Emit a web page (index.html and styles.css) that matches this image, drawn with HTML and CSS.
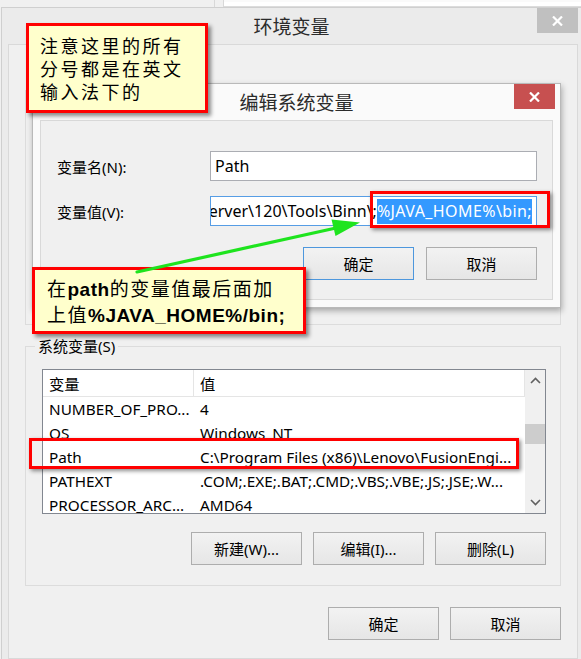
FILE: index.html
```html
<!DOCTYPE html>
<html lang="zh-CN">
<head>
<meta charset="utf-8">
<title>环境变量</title>
<link rel="stylesheet" href="styles.css">
</head>
<body>
<div class="stage">
  <div class="bgwin">
    <div class="bg-left"></div>
    <div class="bg-mid"></div>
    <div class="bg-right"></div>
  </div>

  <div class="win">
    <div class="titlebar">
      <span class="title">环境变量</span>
      <div class="close gray">
        <svg width="11" height="10" viewBox="0 0 11 10"><path d="M1 0.5 L10 9.5 M10 0.5 L1 9.5" stroke="#fff" stroke-width="2.2" fill="none"/></svg>
      </div>
    </div>
    <div class="client">
      <div class="group upper"></div>
      <div class="group sys">
        <span class="legend">系统变量(S)</span>
        <div class="list">
          <div class="list-main">
            <div class="row head">
              <div class="c1">变量</div>
              <div class="c2">值</div>
            </div>
            <div class="row"><div class="c1">NUMBER_OF_PRO...</div><div class="c2">4</div></div>
            <div class="row"><div class="c1">OS</div><div class="c2">Windows_NT</div></div>
            <div class="row"><div class="c1">Path</div><div class="c2">C:\Program Files (x86)\Lenovo\FusionEngi...</div></div>
            <div class="row"><div class="c1">PATHEXT</div><div class="c2">.COM;.EXE;.BAT;.CMD;.VBS;.VBE;.JS;.JSE;.W...</div></div>
            <div class="row"><div class="c1">PROCESSOR_ARC...</div><div class="c2">AMD64</div></div>
          </div>
          <div class="scroll">
            <div class="sbtn"><svg width="11" height="7" viewBox="0 0 11 7"><polyline points="1,6 5.5,1.5 10,6" stroke="#606060" stroke-width="1.6" fill="none"/></svg></div>
            <div class="track"><div class="thumb"></div></div>
            <div class="sbtn"><svg width="11" height="7" viewBox="0 0 11 7"><polyline points="1,1 5.5,5.5 10,1" stroke="#606060" stroke-width="1.6" fill="none"/></svg></div>
          </div>
        </div>
        <div class="btnrow">
          <button class="btn">新建(W)...</button>
          <button class="btn">编辑(I)...</button>
          <button class="btn">删除(L)</button>
        </div>
      </div>
      <div class="btnrow mainbtns">
        <button class="btn">确定</button>
        <button class="btn">取消</button>
      </div>
    </div>
  </div>

  <div class="dialog">
    <div class="titlebar dlg-title">
      <span class="title">编辑系统变量</span>
      <div class="close red">
        <svg width="11" height="10" viewBox="0 0 11 10"><path d="M1 0.5 L10 9.5 M10 0.5 L1 9.5" stroke="#fff" stroke-width="2.2" fill="none"/></svg>
      </div>
    </div>
    <div class="panel">
      <div class="form">
        <label class="lbl">变量名(N):</label>
        <div class="field">Path</div>
        <label class="lbl">变量值(V):</label>
        <div class="field focus value"><span class="val">C:\Program Files\Microsoft SQL Server\120\Tools\Binn\;<span class="sel">%JAVA_HOME%\bin;</span></span></div>
      </div>
      <div class="btnrow dlgbtns">
        <button class="btn default">确定</button>
        <button class="btn">取消</button>
      </div>
    </div>
  </div>

  <div class="note note1">注意这里的所有<br>分号都是在英文<br>输入法下的</div>
  <div class="note note2">在<b>path</b>的变量值最后面加<br>上值<b>%JAVA_HOME%/bin;</b></div>

  <div class="hl hl-sel"></div>
  <div class="hl hl-row"></div>

  <svg class="arrow" width="581" height="659" viewBox="0 0 581 659">
    <line x1="137" y1="272" x2="336" y2="228" stroke="#1ee41e" stroke-width="3.2" stroke-linecap="round"/>
    <polygon points="360,222.5 331.5,219.5 335.5,236" fill="#1ee41e"/>
  </svg>
</div>
</body>
</html>
```

FILE: styles.css
```css
* { box-sizing: border-box; }
html, body { margin: 0; padding: 0; }
body {
  width: 581px;
  height: 659px;
  overflow: hidden;
  background: #f0f0f0;
  font-family: "Noto Sans", "Noto Sans CJK SC", sans-serif;
  font-size: 15px;
  color: #000;
}
.stage { position: relative; width: 581px; height: 659px; overflow: hidden; }

/* background window strip */
.bgwin { height: 7px; display: flex; }
.bg-left { width: 215px; background: #f0f0f0; border-right: 1px solid #d8d8d8; }
.bg-mid { width: 9px; background: #f0f0f0; border-right: 1px solid #d8d8d8; }
.bg-right { flex: 1; background: #fff; border-top: 2px solid #fafafa; border-bottom: 1px solid #dcdcdc; }

/* main window */
.win {
  margin-left: 1px;
  width: 580px;
  height: 652px;
  background: #ebebeb;
  border-top: 1px solid #cfcfcf;
  border-left: 1px solid #cfcfcf;
}
.titlebar { height: 36px; display: flex; align-items: flex-start; padding-right: 3px; }
.title {
  flex: 1;
  text-align: center;
  font-family: "Noto Sans CJK SC", sans-serif;
  font-size: 19px;
  line-height: 35px;
  color: #2b2b2b;
  padding-left: 44px;
}
.close { width: 41px; height: 25px; display: flex; align-items: center; justify-content: center; }
.close.gray { background: #c0c0c0; }
.close.red { background: #c75050; }

.client {
  margin-left: 6px;
  width: 570px;
  height: 615px;
  background: #f0f0f0;
  border: 1px solid #d9d9d9;
  padding: 45px 16px 0 16px;
}
.group { border: 1px solid #dcdcdc; }
.group.upper { height: 235px; }
.group.sys { margin-top: 21px; padding: 0 14px 20px 16px; }
.legend {
  display: block;
  width: max-content;
  margin: -11px 0 0 -7px;
  padding: 0 3px;
  line-height: 20px;
  background: #f0f0f0;
}

.list {
  margin-top: 13px;
  height: 145px;
  border: 1px solid #828790;
  background: #fff;
  display: flex;
  overflow: hidden;
}
.list-main { flex: 1; overflow: hidden; }
.row { display: flex; height: 24px; align-items: center; white-space: nowrap; font-size: 15.3px; }
.row.head { height: 27px; border-bottom: 1px solid #e5e5e5; border-right: 1px solid #e5e5e5; }
.c1 { width: 151px; padding-left: 6px; overflow: hidden; flex-shrink: 0; }
.c2 { flex: 1; padding-left: 6px; overflow: hidden; }
.row.head .c1 { height: 100%; display: flex; align-items: center; border-right: 1px solid #e5e5e5; }
.scroll { width: 20px; background: #f0f0f0; display: flex; flex-direction: column; }
.sbtn { height: 21px; display: flex; align-items: center; justify-content: center; }
.track { flex: 1; }
.thumb { margin-top: 33px; height: 20px; background: #cdcdcd; }

.btnrow { display: flex; justify-content: flex-end; gap: 11px; }
.group .btnrow { margin-top: 18px; }
.mainbtns { margin-top: 21px; }
.btn {
  width: 111px;
  height: 33px;
  border: 1px solid #adadad;
  background: linear-gradient(#f2f2f2, #e6e6e6);
  font-family: "Noto Sans", "Noto Sans CJK SC", sans-serif;
  font-size: 15px;
  color: #000;
  padding: 0;
}
.btn.default { border-color: #4d97dd; }

/* edit dialog */
.dialog {
  position: absolute;
  left: 32px;
  top: 83px;
  width: 529px;
  height: 225px;
  background: #fafafa;
  border: 1px solid #b9b9b9;
  box-shadow: 1px 3px 6px rgba(0,0,0,0.3);
}
.dlg-title { padding-right: 5px; }
.dlg-title .title { padding-left: 46px; }
.panel {
  margin: 0 7px;
  height: 180px;
  background: #f0f0f0;
  border: 1px solid #d9d9d9;
  padding: 30px 15px 0 16px;
}
.form {
  display: grid;
  grid-template-columns: 153px 327px;
  grid-auto-rows: 30px;
  row-gap: 15px;
  align-items: center;
}
.field {
  height: 30px;
  border: 1px solid #abadb3;
  background: #fff;
  padding: 0 4px;
  display: flex;
  align-items: center;
  white-space: nowrap;
  overflow: hidden;
  font-size: 16px;
}
.field.focus { border-color: #569de5; }
.field.value { justify-content: flex-end; }
.val { flex-shrink: 0; }
.sel { background: #3399ff; color: #fff; padding: 1px 0 2px; letter-spacing: 0.4px; }
.dlgbtns { margin-top: 21px; gap: 12px; }

/* annotations */
.note {
  position: absolute;
  background: #ffffcc;
  border: 3px solid #ff0000;
  box-shadow: 3px 3px 4px rgba(0,0,0,0.45);
  font-family: "Noto Sans CJK SC", sans-serif;
  color: #000;
}
.note1 {
  left: 26px; top: 23px; width: 182px; height: 90px;
  padding: 8px 0 0 11px;
  font-size: 18px;
  line-height: 23px;
  letter-spacing: 2.5px;
}
.note2 {
  left: 32px; top: 267px; width: 274px; height: 67px;
  padding: 6px 0 0 12px;
  font-size: 19px;
  line-height: 24px;
  letter-spacing: 1.5px;
}
.note2 b { font-family: "Liberation Sans", sans-serif; font-weight: bold; letter-spacing: 0.5px; }
.hl {
  position: absolute;
  border: 3px solid #ff0000;
  box-shadow: 2px 2px 4px rgba(0,0,0,0.45);
}
.hl-sel { left: 370px; top: 191px; width: 180px; height: 37px; }
.hl-row { left: 29px; top: 438px; width: 490px; height: 31px; }
.arrow { position: absolute; left: 0; top: 0; pointer-events: none; }
```
